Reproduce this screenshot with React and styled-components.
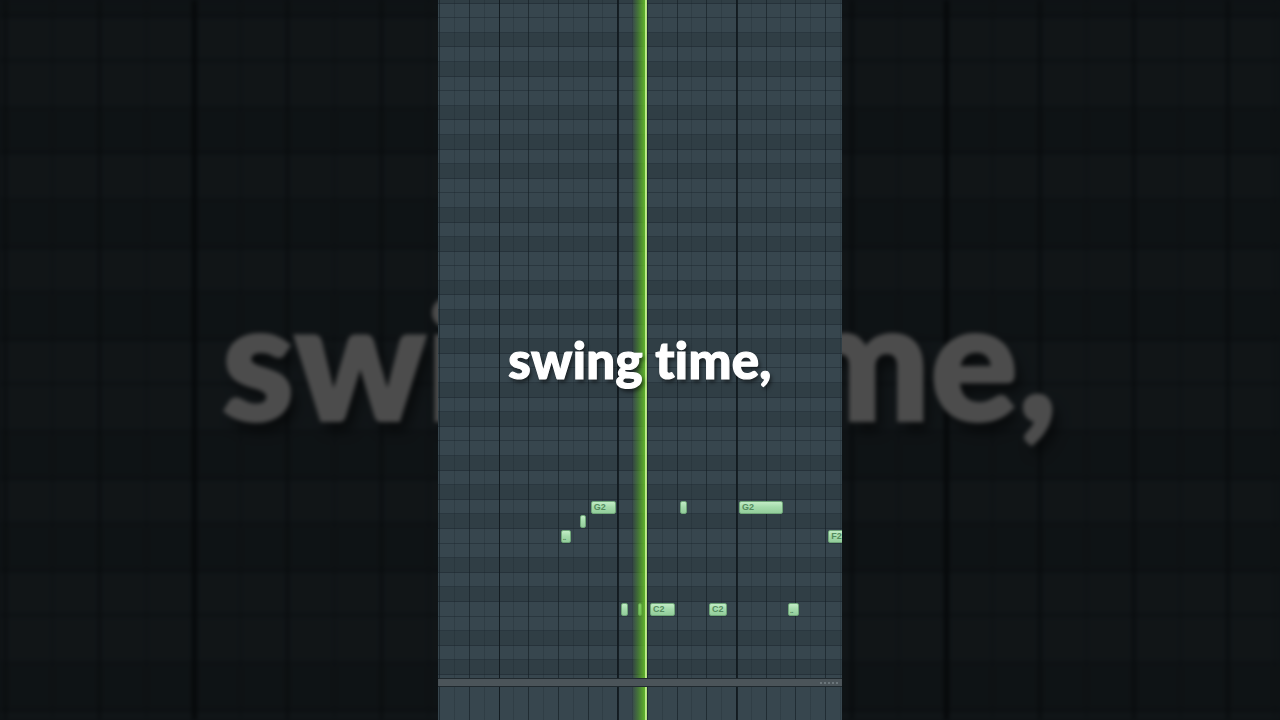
import styled, { createGlobalStyle } from "styled-components";

const ROW_H = 14.6;
const ROW_COUNT = 48;
const G2_ROW = 35;
const BLACK_KEYS = [1, 3, 6, 8, 10];

// semitone of each row, counted down from the top of the roll (G2 sits on row 35)
const isBlackRow = (row) => {
	const semi = (((7 + G2_ROW - row) % 12) + 12) % 12;
	return BLACK_KEYS.includes(semi);
};

const notes = [
	{ x: 122.7, w: 10.3, row: 37, label: "..", tiny: true },
	{ x: 142.3, w: 5.4, row: 36 },
	{ x: 152.7, w: 25, row: 35, label: "G2" },
	{ x: 242, w: 7.3, row: 35 },
	{ x: 301, w: 44, row: 35, label: "G2" },
	{ x: 390.3, w: 16, row: 37, label: "F2" },
	{ x: 182.7, w: 7, row: 42 },
	{ x: 200.3, w: 3, row: 42 },
	{ x: 212, w: 24.7, row: 42, label: "C2" },
	{ x: 271, w: 17.7, row: 42, label: "C2" },
	{ x: 350, w: 10.7, row: 42, label: "..", tiny: true }
];

const GlobalStyle = createGlobalStyle`
	html, body {
		margin: 0;
		padding: 0;
		background: #0d1114;
	}
	body {
		width: 1280px;
		height: 720px;
		overflow: hidden;
		font-family: "Lato", "Liberation Sans", sans-serif;
	}
`;

const PianoRoll = ({ withNotes = true }) => {
	const rows = Array.from({ length: ROW_COUNT }, (_, i) => i);
	return (
		<Panel>
			<GridArea>
				<Rows>
					{rows.map((r) => (
						<Row key={r} $black={isBlackRow(r)} />
					))}
				</Rows>
				<BeatLines />
				{withNotes &&
					notes.map((n, i) => (
						<Note
							key={i}
							$tiny={n.tiny}
							style={{ left: n.x, width: n.w, top: -11 + n.row * ROW_H + 0.8 }}
						>
							{n.label}
						</Note>
					))}
				<Playhead />
			</GridArea>
			<Divider>
				<Grip>
					<span />
					<span />
					<span />
					<span />
					<span />
				</Grip>
			</Divider>
			<EventArea>
				<BeatLines />
				<Playhead />
			</EventArea>
			<Caption>swing time,</Caption>
		</Panel>
	);
};

const App = () => {
	return (
		<>
			<GlobalStyle />
			<Stage>
				<Backdrop aria-hidden='true'>
					<Zoomed>
						<PianoRoll withNotes={false} />
					</Zoomed>
				</Backdrop>
				<Front>
					<PianoRoll />
				</Front>
			</Stage>
		</>
	);
};

const Stage = styled.div`
	position: relative;
	display: flex;
	justify-content: center;
	width: 1280px;
	height: 720px;
	overflow: hidden;
	background: #0d1114;
`;

const Backdrop = styled.div`
	position: absolute;
	inset: 0;
	display: flex;
	justify-content: center;
	overflow: hidden;
	filter: blur(2px) brightness(0.3);
`;

const Zoomed = styled.div`
	flex: none;
	transform: scale(3.17);
	transform-origin: 50% 50%;
`;

const Front = styled.div`
	position: relative;
	z-index: 1;
	flex: none;
`;

const Panel = styled.div`
	position: relative;
	display: flex;
	flex-direction: column;
	width: 404px;
	height: 720px;
	overflow: hidden;
	background: #36454c;
`;

const GridArea = styled.div`
	position: relative;
	flex: none;
	height: 678px;
	overflow: hidden;
`;

const Rows = styled.div`
	display: flex;
	flex-direction: column;
	margin-top: -11px;
`;

const Row = styled.div`
	flex: none;
	height: ${ROW_H}px;
	box-sizing: border-box;
	background: ${(p) => (p.$black ? "#303e45" : "#37464e")};
	box-shadow: inset 0 -1px 0 rgba(20, 30, 36, 0.35);
`;

const BeatLines = styled.div`
	position: absolute;
	inset: 0;
	background-image:
		repeating-linear-gradient(90deg, rgba(16, 24, 29, 0.85) 60.6px 62.2px, transparent 62.2px 179.27px),
		repeating-linear-gradient(90deg, rgba(20, 30, 36, 0.55) 1.3px 2.4px, transparent 2.4px 30.97px),
		repeating-linear-gradient(90deg, rgba(22, 32, 38, 0.22) 1.3px 2.3px, transparent 2.3px 16.13px);
`;

const Note = styled.div`
	position: absolute;
	box-sizing: border-box;
	height: 12.8px;
	padding: 0 0 0 ${(p) => (p.$tiny ? "1px" : "2px")};
	overflow: hidden;
	border: 1px solid #6fa679;
	border-radius: 2px;
	background: linear-gradient(180deg, #c2ecc6 0%, #a6dcad 45%, #93cd9b 100%);
	color: #548a5e;
	font-family: "Liberation Sans", "Lato", sans-serif;
	font-size: ${(p) => (p.$tiny ? "7px" : "9px")};
	font-weight: 700;
	letter-spacing: ${(p) => (p.$tiny ? "-0.5px" : "0")};
	line-height: ${(p) => (p.$tiny ? "13px" : "10.8px")};
	white-space: nowrap;
`;

const Playhead = styled.div`
	position: absolute;
	top: 0;
	bottom: 0;
	left: 194px;
	width: 15px;
	background: linear-gradient(
		90deg,
		rgba(80, 160, 30, 0) 0%,
		rgba(86, 170, 34, 0.45) 40%,
		rgba(100, 190, 40, 0.9) 86%,
		#a8e36e 87%,
		#d4f7a8 94%,
		#8fd050 100%
	);
`;

const Divider = styled.div`
	display: flex;
	justify-content: flex-end;
	align-items: center;
	flex: none;
	height: 9px;
	padding-right: 4px;
	box-sizing: border-box;
	background: #4b5459;
	border-top: 1px solid #20292e;
	border-bottom: 1px solid #20292e;
`;

const Grip = styled.div`
	display: flex;
	gap: 2px;

	span {
		width: 2px;
		height: 2px;
		background: #6b757a;
	}
`;

const EventArea = styled.div`
	position: relative;
	flex: 1;
	background: #37464e;
`;

const Caption = styled.div`
	position: absolute;
	top: 334px;
	left: 0;
	right: 0;
	z-index: 2;
	color: #ffffff;
	font-family: "Lato", "Liberation Sans", sans-serif;
	font-size: 51px;
	font-weight: 900;
	font-variant-ligatures: none;
	line-height: 1;
	letter-spacing: 0.3px;
	text-align: center;
	white-space: nowrap;
	-webkit-text-stroke: 1.2px #ffffff;
	text-shadow: 2px 3px 4px rgba(0, 0, 0, 0.6);
`;

export default App;
